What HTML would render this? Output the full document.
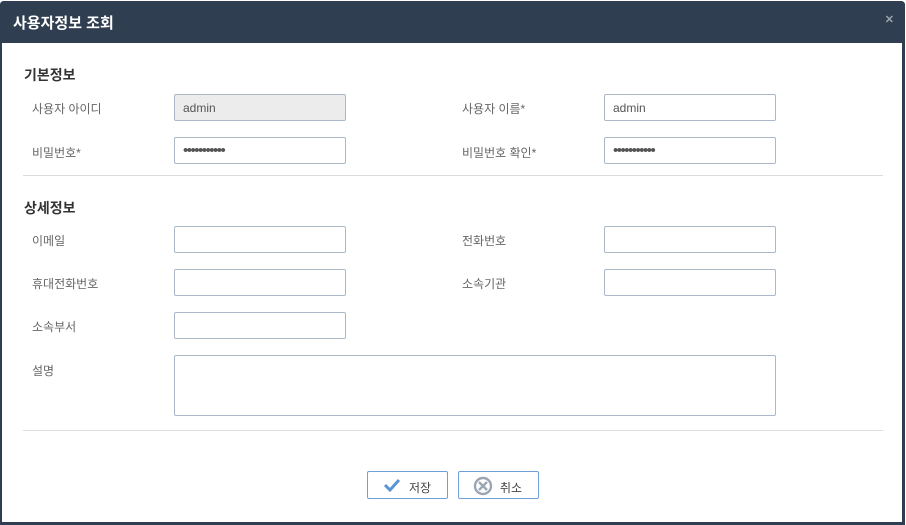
<!DOCTYPE html>
<html><head><meta charset="utf-8"><style>
*{box-sizing:border-box;margin:0;padding:0}
body{width:906px;height:525px;background:#fff;font-family:"Liberation Sans","Noto Sans CJK KR",sans-serif;position:relative;overflow:hidden}
.dlg{position:absolute;left:0;top:1px;width:905px;height:524px;border:2px solid #2f3e50;border-right-width:3px;border-bottom-width:3px;border-top:0;border-radius:4px 4px 0 0}
.hd{position:absolute;left:0;top:1px;width:905px;height:42px;background:#2f3e50;border-radius:4px 4px 0 0}
.hd span{position:absolute;left:13px;top:11px;color:#fff;font-size:15px;font-weight:bold}
.hd i{position:absolute;right:11px;top:12px;color:#9aa3ad;font-style:normal;font-size:11px;font-weight:bold}
.t{position:absolute;font-size:14px;font-weight:bold;color:#333}
.l{position:absolute;font-size:12px;color:#666}
.in{position:absolute;width:172px;height:27px;border:1px solid #aab8c8;border-radius:2px;font-size:12px;color:#555;padding:6px 0 0 8px}
.p{font-size:15px;padding:5px 0 0 8px;letter-spacing:-1.5px;color:#555;line-height:15px}
.g{background:#ececec}
.hr{position:absolute;left:23px;width:860px;height:1px;background:#dcdcdc}
.b{position:absolute;top:471px;width:81px;height:28px;border:1px solid #6fa0d8;border-radius:2px;font-size:12px;color:#444}
</style></head><body>
<div class="dlg"></div>
<div class="hd"><span>사용자정보 조회</span><i>✕</i></div>
<div class="t" style="left:24px;top:65px">기본정보</div>
<div class="l" style="left:32px;top:100px">사용자 아이디</div>
<div class="in g" style="left:174px;top:94px">admin</div>
<div class="l" style="left:462px;top:100px">사용자 이름*</div>
<div class="in" style="left:604px;top:94px">admin</div>
<div class="l" style="left:32px;top:144px">비밀번호*</div>
<div class="in p" style="left:174px;top:137px">•••••••••••</div>
<div class="l" style="left:462px;top:144px">비밀번호 확인*</div>
<div class="in p" style="left:604px;top:137px">•••••••••••</div>
<div class="hr" style="top:175px"></div>
<div class="t" style="left:24px;top:198px">상세정보</div>
<div class="l" style="left:32px;top:232px">이메일</div>
<div class="in" style="left:174px;top:226px"></div>
<div class="l" style="left:462px;top:232px">전화번호</div>
<div class="in" style="left:604px;top:226px"></div>
<div class="l" style="left:32px;top:275px">휴대전화번호</div>
<div class="in" style="left:174px;top:269px"></div>
<div class="l" style="left:462px;top:275px">소속기관</div>
<div class="in" style="left:604px;top:269px"></div>
<div class="l" style="left:32px;top:318px">소속부서</div>
<div class="in" style="left:174px;top:312px"></div>
<div class="l" style="left:32px;top:362px">설명</div>
<div class="in" style="left:174px;top:355px;width:602px;height:61px"></div>
<div class="hr" style="top:430px"></div>
<div class="b" style="left:367px"><svg style="position:absolute;left:15px;top:6px" width="18" height="14"><path d="M2 7l5 5L16 2" stroke="#5b94d6" stroke-width="3" fill="none"/></svg><span style="position:absolute;left:41px;top:7px">저장</span></div>
<div class="b" style="left:458px"><svg style="position:absolute;left:14px;top:4px" width="20" height="20"><circle cx="10" cy="10" r="8" stroke="#9aa6b4" stroke-width="2.4" fill="none"/><path d="M6 6l8 8M14 6l-8 8" stroke="#9aa6b4" stroke-width="2.4"/></svg><span style="position:absolute;left:41px;top:7px">취소</span></div>
</body></html>
